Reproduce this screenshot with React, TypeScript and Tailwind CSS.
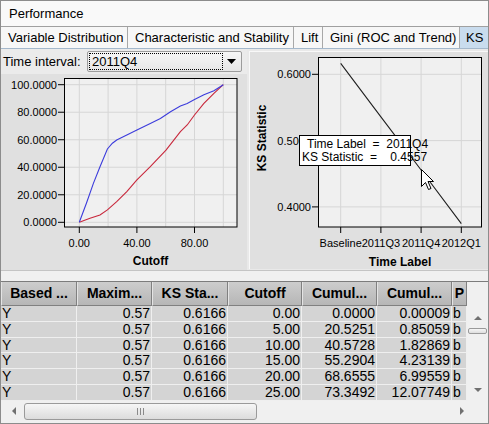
import React from 'react';

const font = "font-['Liberation_Sans',Arial,sans-serif]";

const tabs = [
  { label: 'Variable Distribution', w: 'w-[127px]' },
  { label: 'Characteristic and Stability', w: 'w-[166px]' },
  { label: 'Lift', w: 'w-[29px]' },
  { label: 'Gini (ROC and Trend)', w: 'w-[137px]' },
];

// left chart: cutoff vs cumulative %
const lx = (v: number) => 79.3 + v * 1.44;
const ly = (v: number) => 222.3 - v * 1.376;

const bluePts: [number, number][] = [
  [0, 0], [5, 14], [9.8, 28.3], [14.4, 40.4], [19.5, 53.3], [23, 57.5], [26, 59.8], [33, 63.4], [40, 67],
  [49.3, 71.9], [56.3, 75.5], [63.3, 80.4], [70.2, 84.5], [74.9, 86.4], [80, 89.3], [86.5, 92.7],
  [93.5, 95.6], [100, 100],
];
const redPts: [number, number][] = [
  [0, 0], [7.4, 2.9], [14.4, 5.3], [19.5, 9], [26, 15], [33, 22.3], [40, 30.8], [49.3, 40.4],
  [60.2, 52.5], [70.2, 65.9], [74.9, 70.7], [80, 78], [86.5, 86.4], [93.5, 93.7], [100, 100],
];

const toPath = (pts: [number, number][]) =>
  pts.map(([x, y], i) => `${i ? 'L' : 'M'}${lx(x).toFixed(1)} ${ly(y).toFixed(1)}`).join(' ');

// right chart: KS by time label
const cats = ['Baseline', '2011Q3', '2011Q4', '2012Q1'];
const catX = [340.7, 380.9, 421.1, 461.3];
const ksVals = [0.6166, 0.5359, 0.4557, 0.3748];
const ry = (v: number) => 73.3 + (0.6 - v) * 663;

const rows = [
  ['0.00', '0.0000', '0.00009'],
  ['5.00', '20.5251', '0.85059'],
  ['10.00', '40.5728', '1.82869'],
  ['15.00', '55.2904', '4.23139'],
  ['20.00', '68.6555', '6.99559'],
  ['25.00', '73.3492', '12.07749'],
];

const colW = ['w-[76px]', 'w-[75px]', 'w-[76px]', 'w-[74px]', 'w-[75px]', 'w-[75px]', 'w-[15px]'];
const heads = ['Based ...', 'Maxim...', 'KS Sta...', 'Cutoff', 'Cumul...', 'Cumul...', 'P'];

function LeftChart() {
  return (
    <svg width={246} height={196} viewBox="1 74 246 196" className="block">
      <rect x={64.5} y={78.5} width={172.5} height={148.5} fill="#f0f0f0" />
      {[0, 20, 40, 60, 80, 100].map((v) => (
        <g key={v}>
          <line x1={lx(v)} x2={lx(v)} y1={79} y2={227} stroke="#d6d6d6" />
          <line x1={65} x2={237} y1={ly(v)} y2={ly(v)} stroke="#d6d6d6" />
        </g>
      ))}
      <rect x={64.5} y={78.5} width={172.5} height={148.5} fill="none" stroke="#000" />
      {[0, 20, 40, 60, 80, 100].map((v) => (
        <g key={v}>
          <line x1={58} x2={64} y1={ly(v)} y2={ly(v)} stroke="#000" />
          <text x={57} y={ly(v) + 4} textAnchor="end" fontSize={11} fill="#000">
            {v.toFixed(4)}
          </text>
        </g>
      ))}
      {[0, 40, 80].map((v) => (
        <g key={v}>
          <line x1={lx(v)} x2={lx(v)} y1={227} y2={233} stroke="#000" />
          <text x={lx(v)} y={246.5} textAnchor="middle" fontSize={11} fill="#000">
            {v.toFixed(2)}
          </text>
        </g>
      ))}
      <path d={toPath(redPts)} fill="none" stroke="#c8283c" strokeWidth={1.1} />
      <path d={toPath(bluePts)} fill="none" stroke="#3c3cdc" strokeWidth={1.1} />
      <text x={150.5} y={264.5} textAnchor="middle" fontSize={12} fontWeight="bold" fill="#000">
        Cutoff
      </text>
    </svg>
  );
}

function RightChart() {
  const line = catX.map((x, i) => `${i ? 'L' : 'M'}${x} ${ry(ksVals[i]).toFixed(1)}`).join(' ');
  return (
    <svg width={237} height={218} viewBox="250 51 237 218" className="block">
      <rect x={318.5} y={56.5} width={163} height={169.5} fill="#f0f0f0" />
      {catX.map((x) => (
        <line key={x} x1={x} x2={x} y1={57} y2={226} stroke="#d6d6d6" />
      ))}
      {[0.6, 0.5, 0.4].map((v) => (
        <line key={v} x1={319} x2={481} y1={ry(v)} y2={ry(v)} stroke="#d6d6d6" />
      ))}
      <rect x={318.5} y={56.5} width={163} height={169.5} fill="none" stroke="#000" />
      {[0.6, 0.5, 0.4].map((v) => (
        <g key={v}>
          <line x1={312} x2={318} y1={ry(v)} y2={ry(v)} stroke="#000" />
          <text x={311} y={ry(v) + 4} textAnchor="end" fontSize={11} fill="#000">
            {v.toFixed(4)}
          </text>
        </g>
      ))}
      {catX.map((x, i) => (
        <g key={x}>
          <line x1={x} x2={x} y1={226} y2={232} stroke="#000" />
          <text x={x} y={246} textAnchor="middle" fontSize={11} fill="#000">
            {cats[i]}
          </text>
        </g>
      ))}
      <path d={line} fill="none" stroke="#202020" strokeWidth={1.1} />
      <text
        x={266}
        y={137}
        textAnchor="middle"
        fontSize={12}
        fontWeight="bold"
        fill="#000"
        transform="rotate(-90 266 137)"
      >
        KS Statistic
      </text>
      <text x={400} y={264.5} textAnchor="middle" fontSize={12} fontWeight="bold" fill="#000">
        Time Label
      </text>
      {/* mouse pointer */}
      <path
        d="M421.5 168.5 L421.5 185.5 L425.5 181.5 L428.5 188.5 L431 187.5 L428 180.5 L433.5 180.5 Z"
        fill="#fff"
        stroke="#000"
        strokeWidth={1}
      />
    </svg>
  );
}

function Arrow({ dir }: { dir: 'up' | 'down' | 'left' | 'right' }) {
  const d = {
    up: 'M0 5 L4 1 L8 5 Z',
    down: 'M0 1 L4 5 L8 1 Z',
    left: 'M5 0 L1 4 L5 8 Z',
    right: 'M1 0 L5 4 L1 8 Z',
  }[dir];
  const vertical = dir === 'up' || dir === 'down';
  return (
    <svg width={vertical ? 8 : 6} height={vertical ? 6 : 8} className="block">
      <path d={d} fill="#707070" />
    </svg>
  );
}

export default function App() {
  return (
    <div className={`w-[489px] h-[424px] border border-[#8c8c8c] bg-[#f0f0f0] flex flex-col overflow-hidden text-black ${font}`}>
      {/* Title */}
      <div className="h-[25px] flex items-center pl-[8px] text-[13px] bg-[#f9f9f9]">Performance</div>

      {/* Tabs */}
      <div className="h-[23px] flex border-t border-[#a0a0a0] border-b border-b-[#a4b8cc] bg-[#f7f7f7] text-[13px]">
        {tabs.map((t) => (
          <div key={t.label} className={`${t.w} shrink-0 flex items-center px-[7px] border-r border-[#a8a8a8] whitespace-nowrap`}>
            {t.label}
          </div>
        ))}
        <div className="flex-1 flex items-center px-[6px] bg-[#c9dcee]">KS</div>
      </div>

      {/* Charts */}
      <div className="h-[221px] flex bg-[#e6e6e6]">
        <div className="w-[246px] shrink-0 flex flex-col">
          <div className="h-[25px] flex items-center text-[13px] bg-[#ebebeb]">
            <span className="pl-[2px] w-[86px] shrink-0">Time interval:</span>
            <div className="w-[155px] h-[21px] border border-[#9c9c9c] rounded-[2px] bg-gradient-to-b from-[#f6f6f6] to-[#e6e6e6] flex items-center pl-[1px] pr-[5px]">
              <div className="w-[134px] h-[17px] border border-dotted border-black flex items-center pl-[2px]">2011Q4</div>
              <div className="flex-1 flex justify-end">
                <svg width={9} height={5} className="block">
                  <path d="M0 0 L9 0 L4.5 5 Z" fill="#000" />
                </svg>
              </div>
            </div>
          </div>
          <div className="h-[196px] bg-[#e0e0e0]">
            <LeftChart />
          </div>
        </div>
        <div className="flex-1 relative bg-[#e9e9e9] pt-[2px]">
          <div className="h-[218px] bg-[#e0e0e0] border-l border-t border-[#f8f8f8] ml-[2px]">
            <RightChart />
          </div>
          <div className="absolute z-10 left-[52px] top-[86px] w-[112px] h-[31px] bg-white border border-black text-[12px] leading-[13px] flex flex-col justify-center whitespace-pre">
            <div className="pl-[7px]">{'Time Label  =  2011Q4'}</div>
            <div className="pl-[2px]">{'KS Statistic  =    0.4557'}</div>
          </div>
        </div>
      </div>

      {/* Splitter */}
      <div className="h-[11px] bg-[#f0f0f0] border-t border-[#c4c4c4]" />

      {/* Table */}
      <div className="flex-1 flex flex-col border-t border-[#7c7c7c] bg-[#f0f0f0]">
        <div className="flex">
          <div className="w-[466px] shrink-0 overflow-hidden">
            <div className="flex h-[24px]">
              {heads.map((h, i) => (
                <div
                  key={i}
                  className={`${colW[i]} shrink-0 h-full flex items-center justify-center overflow-hidden whitespace-nowrap text-[14px] font-bold bg-gradient-to-b from-[#cdcdcd] to-[#b6b6b6] border-l border-l-[#e4e4e4] border-r border-r-[#808080] border-b border-b-[#808080]`}
                >
                  {h}
                </div>
              ))}
            </div>
            {rows.map((r, ri) => {
              const cells = ['Y', '0.57', '0.6166', r[0], r[1], r[2], 'b'];
              return (
                <div key={ri} className="flex h-[15.8px] border-b border-[#efefef]">
                  {cells.map((c, ci) => (
                    <div
                      key={ci}
                      className={`${colW[ci]} shrink-0 bg-[#d4d4d4] border-r border-[#efefef] overflow-hidden whitespace-nowrap text-[14px] leading-[15px] ${
                        ci === 0 || ci === 6 ? 'text-left pl-[1px]' : 'text-right pr-[1px]'
                      }`}
                    >
                      {c}
                    </div>
                  ))}
                </div>
              );
            })}
          </div>
          {/* vertical scrollbar */}
          <div className="flex-1 flex flex-col">
            <div className="h-[24px]" />
            <div className="h-[95px] flex flex-col items-center bg-[#f0f0f0]">
              <div className="h-[16px] flex items-end pb-[1px]">
                <Arrow dir="up" />
              </div>
              <div className="mt-[6px] w-[19px] h-[6px] border border-[#9a9a9a] rounded-[2px] bg-gradient-to-b from-[#f6f6f6] to-[#dedede]" />
              <div className="flex-1" />
              <div className="h-[14px] flex items-start">
                <Arrow dir="down" />
              </div>
            </div>
          </div>
        </div>
        {/* horizontal scrollbar */}
        <div className="h-[20px] flex items-center">
          <div className="w-[466px] shrink-0 flex items-center h-full">
            <div className="w-[23px] flex justify-center pl-[2px]">
              <Arrow dir="left" />
            </div>
            <div className="w-[233px] h-[17px] border border-[#9a9a9a] rounded-[3px] bg-gradient-to-b from-[#f6f6f6] to-[#dcdcdc] flex items-center justify-center gap-[2px]">
              <div className="w-px h-[7px] bg-[#8a8a8a]" />
              <div className="w-px h-[7px] bg-[#8a8a8a]" />
              <div className="w-px h-[7px] bg-[#8a8a8a]" />
            </div>
            <div className="flex-1 flex justify-end pr-[2px]">
              <Arrow dir="right" />
            </div>
          </div>
        </div>
      </div>
    </div>
  );
}
